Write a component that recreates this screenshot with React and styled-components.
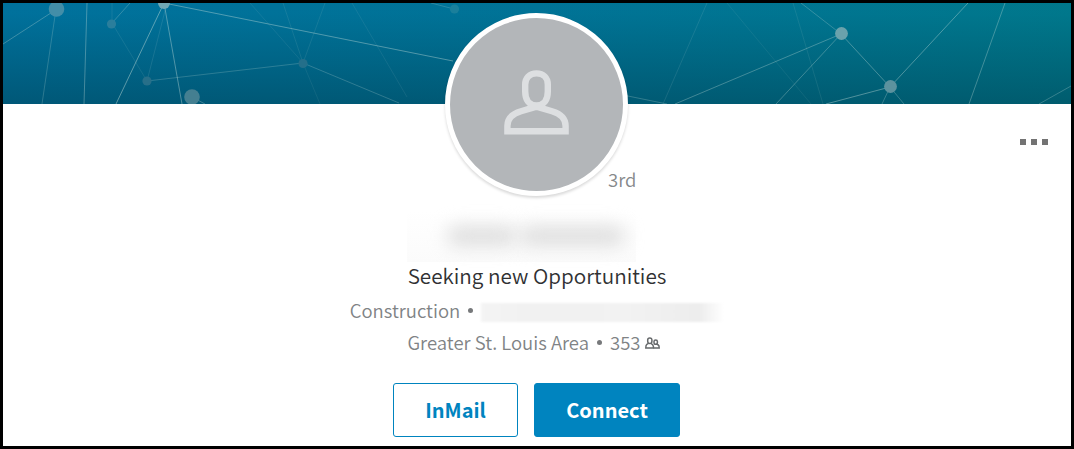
import styled, { createGlobalStyle } from 'styled-components';

const FONT = '"Noto Sans CJK SC", "Noto Sans", sans-serif';
const BLUE = '#0084bf';

// [x1, y1, x2, y2, opacity]
const LINES = [
  [0, 41, 54, 6, 0.3],
  [53, 6, 39, 101, 0.22],
  [84, 0, 81, 101, 0.34],
  [109, 20, 127, 0, 0.25],
  [109, 20, 109, 0, 0.1],
  [109, 20, 144, 78, 0.1],
  [161, 0, 113, 101, 0.45],
  [164, 0, 144, 78, 0.12],
  [161, 0, 179, 101, 0.4],
  [161, 0, 450, 58, 0.4],
  [144, 78, 300, 60, 0.22],
  [300, 60, 247, 0, 0.09],
  [300, 60, 280, 0, 0.1],
  [300, 60, 322, 0, 0.1],
  [300, 60, 317, 101, 0.08],
  [300, 60, 396, 100, 0.23],
  [189, 94, 202, 101, 0.3],
  [349, 0, 404, 94, 0.09],
  [428, 0, 451, 6, 0.2],
  [620, 92, 664, 101, 0.25],
  [704, 0, 660, 101, 0.12],
  [672, 101, 838, 31, 0.32],
  [838, 31, 798, 0, 0.26],
  [838, 31, 773, 101, 0.3],
  [838, 31, 887, 84, 0.34],
  [724, 0, 808, 101, 0.08],
  [790, 0, 820, 101, 0.1],
  [887, 84, 965, 0, 0.38],
  [887, 84, 823, 101, 0.4],
  [887, 84, 879, 101, 0.27],
  [887, 84, 901, 101, 0.27],
  [1002, 0, 966, 101, 0.32],
  [1036, 101, 1068, 83, 0.27],
];

// [cx, cy, r, fill]
const NODES = [
  [53.5, 6, 7.8, '#438ea8'],
  [108.5, 21, 4.6, '#2a7e9c'],
  [161, 0, 6, '#71a8b4'],
  [144, 78, 4.6, '#276f89'],
  [189, 94, 7.8, '#447f91'],
  [300, 60.5, 4.6, '#246f8a'],
  [451.5, 6, 4.6, '#1a7f9b'],
  [838.5, 30.5, 6.4, '#6aa2ac'],
  [887.5, 83.5, 6.4, '#5c929e'],
];

const GlobalStyle = createGlobalStyle`
  * {
    box-sizing: border-box;
  }
  body {
    margin: 0;
    background: #fff;
    font-family: ${FONT};
  }
`;

const BannerArt = () => (
  <svg width="1068" height="101" viewBox="0 0 1068 101" aria-hidden="true">
    {LINES.map(([x1, y1, x2, y2, opacity], i) => (
      <line key={i} x1={x1} y1={y1} x2={x2} y2={y2} stroke="#c9e2dc" strokeOpacity={opacity} />
    ))}
    {NODES.map(([cx, cy, r, fill], i) => (
      <circle key={i} cx={cx} cy={cy} r={r} fill={fill} />
    ))}
  </svg>
);

const PersonIcon = () => (
  <svg width="65" height="65" viewBox="0 0 65 65" fill="none" stroke="#dddfe1" strokeWidth="6.4">
    <path d="M32.5 3.4C25.6 3.4 21.2 7.8 21.2 14.4V21.5C21.2 30 25 35.4 32.5 35.4S43.8 30 43.8 21.5V14.4C43.8 7.8 39.4 3.4 32.5 3.4Z" />
    <path d="M32.5 36.6L17 41.2C8 43.8 3.4 48.5 3.4 56V61.2H61.6V56C61.6 48.5 57 43.8 48 41.2Z" />
  </svg>
);

const PeopleIcon = () => (
  <svg width="15" height="12" viewBox="0 0 15 12" fill="none" stroke="#66696b" strokeWidth="1.5">
    <path d="M4.8 .9C3.4 .9 2.7 1.8 2.7 3V4.2C2.7 5.5 3.5 6.5 4.8 6.5S6.9 5.5 6.9 4.2V3C6.9 1.8 6.2 .9 4.8 .9Z" />
    <path d="M3.5 6.4L1.8 7.3C1 7.8 .8 8.5 .8 10.9H8.4V9.4C8.4 8.2 7.9 7.6 6 6.4" />
    <path d="M10.7 2.9C9.6 2.9 9 3.6 9 4.6V5.4C9 6.4 9.7 7.2 10.7 7.2S12.4 6.4 12.4 5.4V4.6C12.4 3.6 11.8 2.9 10.7 2.9Z" />
    <path d="M11.7 7.2L13.3 8C14 8.4 14.2 9 14.2 10.9H8.4" />
  </svg>
);

const App = () => {
  return (
    <>
      <GlobalStyle />
      <SCard>
        <SBanner>
          <BannerArt />
        </SBanner>
        <STop>
          <SAvatar>
            <PersonIcon />
          </SAvatar>
          <SDegree>3rd</SDegree>
          <SMore aria-label="More">
            <i />
            <i />
            <i />
          </SMore>
        </STop>
        <SNameBox>
          <SSmudge $w={70} />
          <SSmudge $w={106} />
        </SNameBox>
        <SHeadline>Seeking new Opportunities</SHeadline>
        <SDetail>
          <SText>Construction</SText>
          <SDot />
          <SSchool />
        </SDetail>
        <SDetail>
          <SText>Greater St. Louis Area</SText>
          <SDot />
          <SCount>
            <SText>353</SText>
            <PeopleIcon />
          </SCount>
        </SDetail>
        <SActions>
          <SButton $width={125}>InMail</SButton>
          <SButton $width={146} $primary>
            Connect
          </SButton>
        </SActions>
      </SCard>
    </>
  );
};

const SCard = styled.main`
  display: flex;
  flex-direction: column;
  align-items: center;
  width: 1074px;
  height: 449px;
  border: 3px solid #000;
  background: #fff;
  overflow: hidden;
`;

const SBanner = styled.div`
  flex: none;
  width: 1068px;
  height: 101px;
  background: linear-gradient(to bottom, rgba(0, 60, 80, 0.04) 10%, rgba(0, 50, 65, 0.42) 100%),
    linear-gradient(to right, #00739f 0%, #007599 50%, #007a8e 100%);
  svg {
    display: block;
  }
`;

const STop = styled.div`
  display: grid;
  grid-template-columns: 442px 183px 1fr auto;
  flex: none;
  width: 1068px;
  height: 183px;
  margin-top: -91px;
`;

const SAvatar = styled.div`
  grid-column: 2;
  display: flex;
  justify-content: center;
  width: 183px;
  height: 183px;
  padding-top: 52px;
  border: 5px solid #fff;
  border-radius: 50%;
  background: #b3b6b9;
  box-shadow: 0 2px 3px rgba(0, 0, 0, 0.15);
`;

const SDegree = styled.span`
  align-self: end;
  margin: 0 0 4px -20px;
  color: #86898b;
  font-size: 18.5px;
  font-weight: 350;
  line-height: 26px;
`;

const SMore = styled.button`
  display: flex;
  align-self: start;
  gap: 5.3px;
  margin: 126px 23.5px 0 0;
  padding: 0;
  border: 0;
  background: none;
  i {
    width: 5.6px;
    height: 6px;
    background: #737373;
  }
`;

const SNameBox = styled.div`
  display: flex;
  justify-content: center;
  align-items: center;
  flex: none;
  gap: 2px;
  width: 229px;
  height: 52px;
  margin: 14px 0 0 -31px;
  padding-left: 28px;
  background: linear-gradient(to bottom, #fff, #fbfbfb);
`;

const SSmudge = styled.span`
  width: ${({ $w }) => $w}px;
  height: 20px;
  border-radius: 10px;
  background: #dedede;
  filter: blur(9px);
`;

const SHeadline = styled.h2`
  flex: none;
  margin: -2px 0 1px;
  color: #303133;
  font-size: 20.7px;
  font-weight: 350;
  line-height: 30px;
  white-space: nowrap;
`;

const SDetail = styled.div`
  display: flex;
  align-items: center;
  flex: none;
  gap: 8px;
  height: 26px;
  margin-top: 6px;
  color: #808385;
  font-size: 18.5px;
  font-weight: 350;
`;

const SText = styled.span`
  line-height: 26px;
  white-space: nowrap;
`;

const SCount = styled.span`
  display: flex;
  align-items: center;
  gap: 4px;
  margin-right: 7px;
  svg {
    margin-top: 1px;
  }
`;

const SDot = styled.span`
  width: 5px;
  height: 5px;
  margin-top: 1px;
  border-radius: 50%;
  background: #77797b;
`;

const SSchool = styled.span`
  width: 243px;
  height: 19px;
  margin-top: 4px;
  background: linear-gradient(to right, #f4f4f4, #f1f1f1 20%, #f2f2f2 60%, #ededed 90%, #fff);
  filter: blur(1px);
`;

const SActions = styled.div`
  display: flex;
  flex: none;
  gap: 16px;
  margin: 28px 1px 0 0;
`;

const SButton = styled.button`
  width: ${({ $width }) => $width}px;
  height: 54px;
  padding: 0 0 2px;
  border: 1px solid ${BLUE};
  border-radius: 3px;
  background: ${({ $primary }) => ($primary ? BLUE : '#fff')};
  color: ${({ $primary }) => ($primary ? '#fff' : BLUE)};
  font-family: inherit;
  font-size: 20px;
  font-weight: 700;
`;

export default App;
